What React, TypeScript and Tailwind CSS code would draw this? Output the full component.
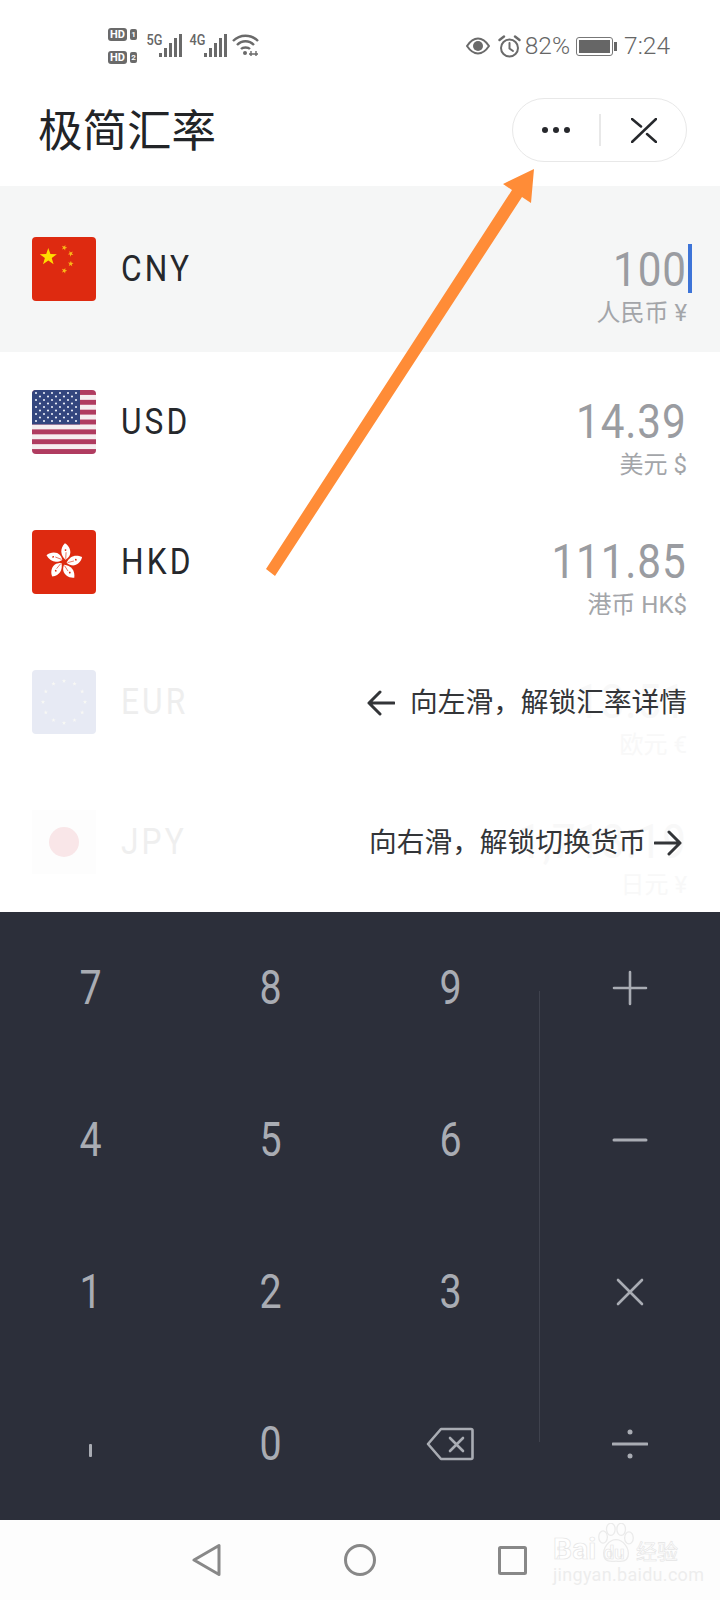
import type { ReactNode } from "react";

const starPoints = (cx: number, cy: number, r: number, rot = 0) => {
  const pts: string[] = [];
  for (let i = 0; i < 10; i++) {
    const rad = i % 2 === 0 ? r : r * 0.4;
    const a = ((-90 + rot + i * 36) * Math.PI) / 180;
    pts.push(`${(cx + rad * Math.cos(a)).toFixed(2)},${(cy + rad * Math.sin(a)).toFixed(2)}`);
  }
  return pts.join(" ");
};

const FlagCN = () => (
  <svg width="64" height="64" viewBox="0 0 64 64" className="rounded-[4px]">
    <rect width="64" height="64" fill="#de2a10" />
    <polygon points={starPoints(16.3, 20, 9)} fill="#ffdd00" />
    <polygon points={starPoints(32.3, 10.7, 3, 20)} fill="#f9b918" />
    <polygon points={starPoints(38.7, 16.7, 3, 45)} fill="#f9b918" />
    <polygon points={starPoints(38.7, 26.7, 3, 5)} fill="#f9b918" />
    <polygon points={starPoints(32.3, 33.7, 3, 20)} fill="#f9b918" />
  </svg>
);

const FlagUS = () => {
  const stars: ReactNode[] = [];
  for (let r = 0; r < 9; r++) {
    const n = r % 2 === 0 ? 6 : 5;
    for (let c = 0; c < n; c++) {
      const x = (r % 2 === 0 ? 4 : 8) + c * 8;
      stars.push(<circle key={`${r}-${c}`} cx={x} cy={3 + r * 3.5} r="1.1" fill="#e8ecf5" />);
    }
  }
  return (
    <svg width="64" height="64" viewBox="0 0 64 64" className="rounded-[4px]">
      <rect width="64" height="64" fill="#f6eef0" />
      {[0, 2, 4, 6, 8, 10, 12].map((i) => (
        <rect key={i} y={i * 4.923} width="64" height="4.923" fill="#b03c60" />
      ))}
      <rect width="48" height="34.4" fill="#33467e" />
      {stars}
    </svg>
  );
};

const FlagHK = () => (
  <svg width="64" height="64" viewBox="0 0 64 64" className="rounded-[4px]">
    <rect width="64" height="64" fill="#de2a10" />
    <g transform="translate(32 32)">
      {[0, 72, 144, 216, 288].map((a) => (
        <g key={a} transform={`rotate(${a + 12})`}>
          <path d="M1 -2.500C-5 -6 -7 -12 -3 -18.500C2 -17 5.500 -11.500 4 -7C3.300 -5 2 -3.500 1 -2.500Z" fill="#fff" />
          <circle cx="-1" cy="-12" r="0.9" fill="#de2a10" />
          <path d="M1 -3.500L0 -10" stroke="#de2a10" strokeWidth="0.600" />
        </g>
      ))}
    </g>
  </svg>
);

const FlagEU = () => (
  <svg width="64" height="64" viewBox="0 0 64 64" className="rounded-[4px]">
    <rect width="64" height="64" fill="#e7eaf4" />
    {Array.from({ length: 12 }).map((_, i) => {
      const a = (i * 30 * Math.PI) / 180;
      return (
        <polygon key={i} points={starPoints(32 + 21 * Math.cos(a), 32 + 21 * Math.sin(a), 2.2)} fill="#f8f8f4" />
      );
    })}
  </svg>
);

const FlagJP = () => (
  <svg width="64" height="64" viewBox="0 0 64 64">
    <rect width="64" height="64" fill="#fdfdfd" />
    <circle cx="32" cy="32" r="15" fill="#f9e6e8" />
  </svg>
);

const Signal = () => (
  <svg width="23" height="23" viewBox="0 0 23 23" fill="#6a6a6a">
    <rect x="0" y="19" width="3" height="4" />
    <rect x="5" y="14" width="3" height="9" />
    <rect x="10" y="9" width="3" height="14" />
    <rect x="15" y="4" width="3" height="19" />
    <rect x="20" y="0" width="3" height="23" />
  </svg>
);

const rows = [
  { code: "CNY", value: "100", name: "人民币 ¥", flag: <FlagCN /> },
  { code: "USD", value: "14.39", name: "美元 $", flag: <FlagUS /> },
  { code: "HKD", value: "111.85", name: "港币 HK$", flag: <FlagHK /> },
];

const Sans = "[font-family:Roboto,'Noto_Sans_CJK_SC',sans-serif]";

const Row = ({ code, value, name, flag, active }: { code: string; value: string; name: string; flag: ReactNode; active?: boolean }) => (
  <div className={active ? "flex h-[166px] items-start bg-[#f5f6f6] pl-[32px] pr-[33px]" : "flex h-[140px] items-start pl-[32px] pr-[33px]"}>
    <div className={active ? "mt-[51px] h-[64px] w-[64px]" : "mt-[38px] h-[64px] w-[64px]"}>{flag}</div>
    <div className={active ? "mt-[59px] ml-[25px] origin-left scale-x-[.88] text-[36px] leading-[48px] font-normal tracking-[3.500px] text-[#26282c]" : "mt-[46px] ml-[25px] origin-left scale-x-[.88] text-[36px] leading-[48px] font-normal tracking-[3.500px] text-[#26282c]"}>
      {code}
    </div>
    <div className={active ? "mt-[54px] ml-auto flex flex-col items-end" : "mt-[40px] ml-auto flex flex-col items-end"}>
      <div className="origin-right scale-x-[.88] text-[48px] leading-[60px] font-normal tracking-[1px] text-[#9a9ca1]">{value}</div>
      <div className="text-[24px] leading-[26px] font-normal text-[#a3a5a9]">{name}</div>
    </div>
  </div>
);

const FadedRow = ({ code, value, name, flag, color }: { code: string; value: string; name: string; flag: ReactNode; color: string }) => (
  <div className="flex h-[140px] items-start pl-[32px] pr-[33px]">
    <div className="mt-[38px] h-[64px] w-[64px]">{flag}</div>
    <div className={`mt-[46px] ml-[25px] origin-left scale-x-[.88] text-[36px] leading-[48px] font-normal tracking-[3.500px] ${color}`}>{code}</div>
    <div className="mt-[40px] ml-auto flex flex-col items-end text-[#f8f8f8]">
      <div className="origin-right scale-x-[.88] text-[48px] leading-[60px] font-normal tracking-[1px]">{value}</div>
      <div className="text-[24px] leading-[26px] font-normal">{name}</div>
    </div>
  </div>
);

const keyClass = "flex h-[152px] items-center justify-center text-[48px] font-normal text-[#a9acb3]";

const NumKey = ({ label }: { label: string }) => (
  <div className={keyClass}>
    <span className="scale-x-[.82]">{label}</span>
  </div>
);

const OpIcon = ({ children, size = 36 }: { children: ReactNode; size?: number }) => (
  <div className={keyClass}>
    <svg width={size} height={size} viewBox="0 0 36 36" fill="none" stroke="#a9acb3" strokeWidth="3" strokeLinecap="round">
      {children}
    </svg>
  </div>
);

export default function App() {
  return (
    <div className={`relative flex h-[1600px] w-[720px] flex-col overflow-hidden bg-white ${Sans}`}>
      {/* status bar */}
      <div className="flex h-[82px] items-center justify-between pt-[10px] pr-[50px] pl-[108px] text-[#666]">
        <div className="flex items-center">
          <div className="flex flex-col gap-[10px]">
            {["1", "2"].map((n) => (
              <div key={n} className="flex items-center gap-[3px]">
                <span className="flex h-[13px] w-[19px] items-center justify-center rounded-[3px] bg-[#6a6a6a] text-[11px] leading-none font-bold text-white">HD</span>
                <span className="flex h-[11px] w-[7px] items-center justify-center rounded-[2px] bg-[#6a6a6a] text-[8px] leading-none font-bold text-white">{n}</span>
              </div>
            ))}
          </div>
          <div className="mb-[2px] ml-[8px] flex items-end">
            <span className="mr-[-5px] mb-[9px] scale-x-[.85] text-[15px] leading-none font-medium">5G</span>
            <Signal />
          </div>
          <div className="mb-[2px] ml-[6px] flex items-end">
            <span className="mr-[-3px] mb-[9px] scale-x-[.85] text-[15px] leading-none font-medium">4G</span>
            <Signal />
          </div>
          <svg width="27" height="24" viewBox="0 0 27 24" fill="none" stroke="#6a6a6a" strokeWidth="2.4" className="mb-[2px] ml-[5px]">
            <path d="M1 8C8 1 19 1 26 8" />
            <path d="M5 12C10 7 17 7 22 12" />
            <path d="M9 16C11 14 16 14 18 16" />
            <circle cx="13" cy="20" r="2" fill="#6a6a6a" stroke="none" />
            <path d="M19 18V23M24 18V23M17 21H26" strokeWidth="1.4" />
          </svg>
        </div>
        <div className="flex items-center text-[24.500px] leading-none font-light">
          <svg width="24" height="18" viewBox="0 0 24 18" fill="none" stroke="#6a6a6a" strokeWidth="2">
            <path d="M1 9C5 3 8.500 1.500 12 1.500C15.500 1.500 19 3 23 9C19 15 15.500 16.500 12 16.500C8.500 16.500 5 15 1 9Z" />
            <circle cx="12" cy="9" r="5" fill="#6a6a6a" stroke="none" />
          </svg>
          <svg width="23" height="23" viewBox="0 0 23 23" fill="none" stroke="#6a6a6a" strokeWidth="2" strokeLinecap="round" className="ml-[8px]">
            <circle cx="11.500" cy="13" r="8.500" />
            <path d="M11.500 8V13.500L15 16" />
            <path d="M1.500 5L6 1.500M21.500 5L17 1.500" strokeWidth="2.400" />
          </svg>
          <span className="ml-[4px]">82%</span>
          <div className="ml-[6px] flex h-[19px] w-[37px] items-center rounded-[3px] border border-[#777] p-[2px]">
            <div className="h-full w-[31px] bg-[#666]" />
          </div>
          <div className="ml-[1px] h-[9px] w-[3px] bg-[#666]" />
          <span className="ml-[7px]">7:24</span>
        </div>
      </div>

      {/* title bar */}
      <div className="flex h-[104px] items-start justify-between pr-[33px] pl-[38px]">
        <div className="mt-[24px] text-[44.500px] leading-[52px] text-[#222427]">极简汇率</div>
        <div className="mt-[16px] flex h-[64px] w-[175px] items-center rounded-full border border-[#e8e8e8]">
          <div className="flex w-[86px] items-center justify-center gap-[5px]">
            <span className="h-[6px] w-[6px] rounded-full bg-[#26282c]" />
            <span className="h-[6px] w-[6px] rounded-full bg-[#26282c]" />
            <span className="h-[6px] w-[6px] rounded-full bg-[#26282c]" />
          </div>
          <div className="h-[32px] w-[2px] bg-[#e8e8e8]" />
          <svg width="26" height="25" viewBox="0 0 26 25" fill="none" stroke="#26282c" strokeWidth="2.500" strokeLinecap="round" className="ml-[30px]">
            <path d="M25 1L1 24" />
            <path d="M1 1L10 8.500M16 16L25 24" />
          </svg>
        </div>
      </div>

      {/* currency rows */}
      <Row {...rows[0]} active />
      <Row {...rows[1]} />
      <Row {...rows[2]} />
      <FadedRow code="EUR" value="13.51" name="欧元 €" flag={<FlagEU />} color="text-[#eeeeee]" />
      <FadedRow code="JPY" value="1,713.19" name="日元 ¥" flag={<FlagJP />} color="text-[#efefef]" />

      {/* keypad */}
      <div className="relative grid flex-1 grid-cols-4 bg-[#2c2f3a]">
        {["7", "8", "9"].map((k) => <NumKey key={k} label={k} />)}
        <OpIcon><path d="M18 2V34M2 18H34" strokeWidth="2.600" /></OpIcon>
        {["4", "5", "6"].map((k) => <NumKey key={k} label={k} />)}
        <OpIcon><path d="M2 18H34" /></OpIcon>
        {["1", "2", "3"].map((k) => <NumKey key={k} label={k} />)}
        <OpIcon><path d="M6 6L30 30M30 6L6 30" strokeWidth="2.600" /></OpIcon>
        <div className={keyClass}>
          <span className="mt-[12px] h-[13px] w-[3px] rounded-[1px] bg-[#a9acb3]" />
        </div>
        <NumKey label="0" />
        <div className={keyClass}>
          <svg width="48" height="34" viewBox="0 0 48 34" fill="none" stroke="#a9acb3" strokeWidth="2.600" strokeLinejoin="round" strokeLinecap="round">
            <path d="M15 2H45C46 2 46.500 2.500 46.500 3.500V30.500C46.500 31.500 46 32 45 32H15L2 17Z" />
            <path d="M24 11L37 24M37 11L24 24" />
          </svg>
        </div>
        <OpIcon>
          <path d="M1 18H35" />
          <circle cx="18" cy="6" r="2.500" fill="#a9acb3" stroke="none" />
          <circle cx="18" cy="30" r="2.500" fill="#a9acb3" stroke="none" />
        </OpIcon>
        <div className="absolute top-[79px] left-[539px] h-[451px] w-[1px] bg-[#3f424d]" />
      </div>

      {/* nav bar */}
      <div className="flex h-[80px] items-center bg-[#fdfdfd]">
        <svg width="30" height="34" viewBox="0 0 30 34" fill="none" stroke="#888" strokeWidth="3" strokeLinejoin="round" className="ml-[192px]">
          <path d="M27 2.500V31.500L2 17Z" />
        </svg>
        <svg width="32" height="32" viewBox="0 0 32 32" fill="none" stroke="#888" strokeWidth="3" className="ml-[122px]">
          <circle cx="16" cy="16" r="14.500" />
        </svg>
        <svg width="29" height="29" viewBox="0 0 29 29" fill="none" stroke="#888" strokeWidth="3" strokeLinejoin="round" className="ml-[122px]">
          <rect x="1.500" y="1.500" width="26" height="26" rx="1" />
        </svg>
      </div>

      {/* swipe hints */}
      <div className="absolute top-[684px] right-[33px] flex h-[38px] items-center text-[27.700px] leading-none text-[#333538]">
        <svg width="28" height="26" viewBox="0 0 28 26" fill="none" stroke="#333538" strokeWidth="3" strokeLinecap="round" strokeLinejoin="round" className="mr-[15px]">
          <path d="M27 13H2M13 2L2 13L13 24" />
        </svg>
        向左滑，解锁汇率详情
      </div>
      <div className="absolute top-[824px] right-[38px] flex h-[38px] items-center text-[27.700px] leading-none text-[#333538]">
        向右滑，解锁切换货币
        <svg width="28" height="26" viewBox="0 0 28 26" fill="none" stroke="#333538" strokeWidth="3" strokeLinecap="round" strokeLinejoin="round" className="ml-[8px]">
          <path d="M1 13H26M15 2L26 13L15 24" />
        </svg>
      </div>

      {/* annotation arrow */}
      <svg width="720" height="1600" viewBox="0 0 720 1600" className="pointer-events-none absolute top-0 left-0">
        <polygon points="266,569 275,576 522,197 531,203 534,169 503,184 512,190" fill="#ff8c37" />
      </svg>

      {/* watermark */}
      <div className="absolute top-[1520px] left-[552px] h-[70px] w-[135px]">
        <svg width="38" height="41" viewBox="0 0 44 47" fill="none" stroke="#ebebeb" strokeWidth="1.500" className="absolute top-[3px] left-[45px]">
          <ellipse cx="7" cy="16" rx="5" ry="7" />
          <ellipse cx="16" cy="7" rx="5" ry="7" />
          <ellipse cx="28" cy="7" rx="5" ry="7" />
          <ellipse cx="37" cy="17" rx="5" ry="7" />
          <path d="M22 19C30 19 38 29 36 38C34 46 26 44 22 44C18 44 10 46 8 38C6 29 14 19 22 19Z" />
        </svg>
        <span className="absolute top-[14px] left-[1px] text-[30px] leading-[30px] font-bold text-white [-webkit-text-stroke:0.7px_#e6e6e6]">Bai</span>
        <span className="absolute top-[23px] left-[52px] text-[18px] leading-[20px] font-bold text-white [-webkit-text-stroke:0.7px_#e6e6e6]">du</span>
        <span className="absolute top-[20px] left-[84px] text-[21px] leading-[25px] text-white [-webkit-text-stroke:0.6px_#e4e4e4]">经验</span>
        <span className="absolute top-[45px] left-[1px] text-[18px] leading-[20px] tracking-[.3px] text-[#ededed]">jingyan.baidu.com</span>
      </div>

      {/* caret */}
      <div className="absolute top-[244px] left-[688px] h-[49px] w-[4px] bg-[#3d74d8]" />
    </div>
  );
}
